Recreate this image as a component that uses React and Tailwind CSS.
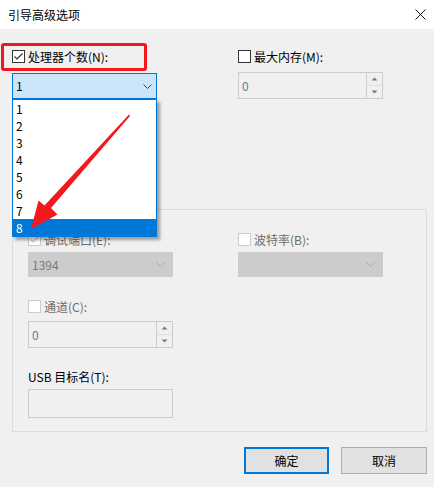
import React from "react";

const font = { fontFamily: '"Noto Sans CJK SC", "Microsoft YaHei", sans-serif' };

function Check({ checked, disabled }) {
  return (
    <div
      className={`w-[13px] h-[13px] shrink-0 border bg-white flex items-center justify-center ${
        disabled ? "border-[#cccccc]" : "border-[#333333]"
      }`}
    >
      {checked && (
        <svg width="11" height="11" viewBox="0 0 11 11">
          <path
            d="M1.5 5.5 L4 8 L9.5 2.5"
            fill="none"
            stroke={disabled ? "#c4c4c4" : "#333333"}
            strokeWidth="1.2"
          />
        </svg>
      )}
    </div>
  );
}

function CheckRow({ label, checked, disabled }) {
  return (
    <div className="flex items-center h-[13px] gap-[3px]">
      <Check checked={checked} disabled={disabled} />
      <span
        className={`text-[12px] leading-[13px] whitespace-nowrap ${
          disabled ? "text-[#6d6d6d]" : "text-black"
        }`}
      >
        {label}
      </span>
    </div>
  );
}

function Chevron({ color }) {
  return (
    <svg width="9" height="5" viewBox="0 0 9 5">
      <path d="M0.5 0.5 L4.5 4.5 L8.5 0.5" fill="none" stroke={color} strokeWidth="1" />
    </svg>
  );
}

function Spin({ value, h }) {
  return (
    <div className={`w-[145px] ${h} border border-[#cccccc] bg-[#f0f0f0] flex`}>
      <div className="flex-1 flex items-center pl-[3px] text-[12px] text-[#6d7a8a]">{value}</div>
      <div className="w-[16px] flex flex-col border-l border-[#cccccc]">
        <div className="flex-1 flex items-center justify-center border-b border-[#e0e0e0] bg-[#f0f0f0]">
          <svg width="7" height="4" viewBox="0 0 7 4">
            <path d="M0.5 3.5 L3.5 0.5 L6.5 3.5 Z" fill="#7a7a7a" />
          </svg>
        </div>
        <div className="flex-1 flex items-center justify-center bg-[#f0f0f0]">
          <svg width="7" height="4" viewBox="0 0 7 4">
            <path d="M0.5 0.5 L3.5 3.5 L6.5 0.5 Z" fill="#7a7a7a" />
          </svg>
        </div>
      </div>
    </div>
  );
}

function DisabledSelect({ value }) {
  return (
    <div className="w-[145px] h-[25px] bg-[#cccccc] flex items-center justify-between pl-[4px] pr-[8px]">
      <span className="text-[12px] text-[#7a7a7a]">{value}</span>
      <Chevron color="#a8a8a8" />
    </div>
  );
}

export default function App() {
  const items = ["1", "2", "3", "4", "5", "6", "7", "8"];
  return (
    <div className="relative w-[434px] h-[487px] bg-[#f0f0f0] overflow-hidden" style={font}>
      {/* title bar */}
      <div className="h-[29px] bg-white flex items-center justify-between pl-[8px] pr-[6px]">
        <span className="text-[12px] text-black leading-none">引导高级选项</span>
        <svg width="11" height="11" viewBox="0 0 11 11" className="mr-[2px]">
          <path d="M0.5 0.5 L10.5 10.5 M10.5 0.5 L0.5 10.5" stroke="#111" strokeWidth="1" />
        </svg>
      </div>

      {/* body */}
      <div className="pl-[12px] pr-[7px] pt-[21px]">
        <div className="flex">
          <div className="w-[226px] flex flex-col">
            <CheckRow label="处理器个数(N):" checked />
          </div>
          <div className="flex flex-col">
            <CheckRow label="最大内存(M):" />
          </div>
        </div>
        <div className="flex items-end mt-[9px]">
          <div className="w-[226px]">
            <div className="w-[145px] h-[26px] border border-[#0078d7] bg-[#cce4f7] flex items-center justify-between pl-[3px] pr-[4px]">
              <span className="text-[12px] text-black">1</span>
              <Chevron color="#444" />
            </div>
          </div>
          <Spin value="0" h="h-[27px]" />
        </div>

        {/* group box */}
        <div className="mt-[110px] w-[415px] h-[223px] border border-[#dcdcdc] pl-[15px] pt-[23px]">
          <div className="flex">
            <div className="w-[210px]">
              <CheckRow label="调试端口(E):" checked disabled />
            </div>
            <CheckRow label="波特率(B):" disabled />
          </div>
          <div className="flex mt-[6px]">
            <div className="w-[210px]">
              <DisabledSelect value="1394" />
            </div>
            <DisabledSelect value="" />
          </div>
          <div className="mt-[23px]">
            <CheckRow label="通道(C):" disabled />
          </div>
          <div className="mt-[8px]">
            <Spin value="0" h="h-[27px]" />
          </div>
          <div className="mt-[22px] h-[13px] flex items-center text-[12px] text-black">USB 目标名(T):</div>
          <div className="mt-[6px] w-[145px] h-[29px] border border-[#cccccc] bg-[#f0f0f0]" />
        </div>

        {/* buttons */}
        <div className="flex justify-end gap-[12px] mt-[15px]">
          <button className="w-[85px] h-[27px] border-2 border-[#0078d7] bg-[#e1e1e1] text-[12px] text-black flex items-center justify-center">
            确定
          </button>
          <button className="w-[86px] h-[27px] border border-[#adadad] bg-[#e1e1e1] text-[12px] text-black flex items-center justify-center">
            取消
          </button>
        </div>
      </div>

      {/* open dropdown list */}
      <div className="absolute left-[12px] top-[99px] w-[145px] border border-[#0078d7] bg-white shadow-[3px_3px_3px_rgba(0,0,0,0.35)]">
        {items.map((it) => (
          <div
            key={it}
            className={`h-[17px] flex items-center pl-[3px] text-[12px] ${
              it === "8" ? "bg-[#0078d7] text-white" : "text-black"
            }`}
          >
            {it}
          </div>
        ))}
      </div>

      {/* red annotation box */}
      <div className="absolute left-[1px] top-[43px] w-[146px] h-[28px] border-[3px] border-[#f2181c] rounded-[3px] pointer-events-none" />

      {/* red arrow */}
      <svg className="absolute left-0 top-0 pointer-events-none" width="434" height="487" viewBox="0 0 434 487">
        <path
          d="M129 114.5 L130 116 L51 208 L57.5 214.5 L31 229 L38.5 200.5 L44.5 205.5 Z"
          fill="#f2181c"
        />
      </svg>
    </div>
  );
}
